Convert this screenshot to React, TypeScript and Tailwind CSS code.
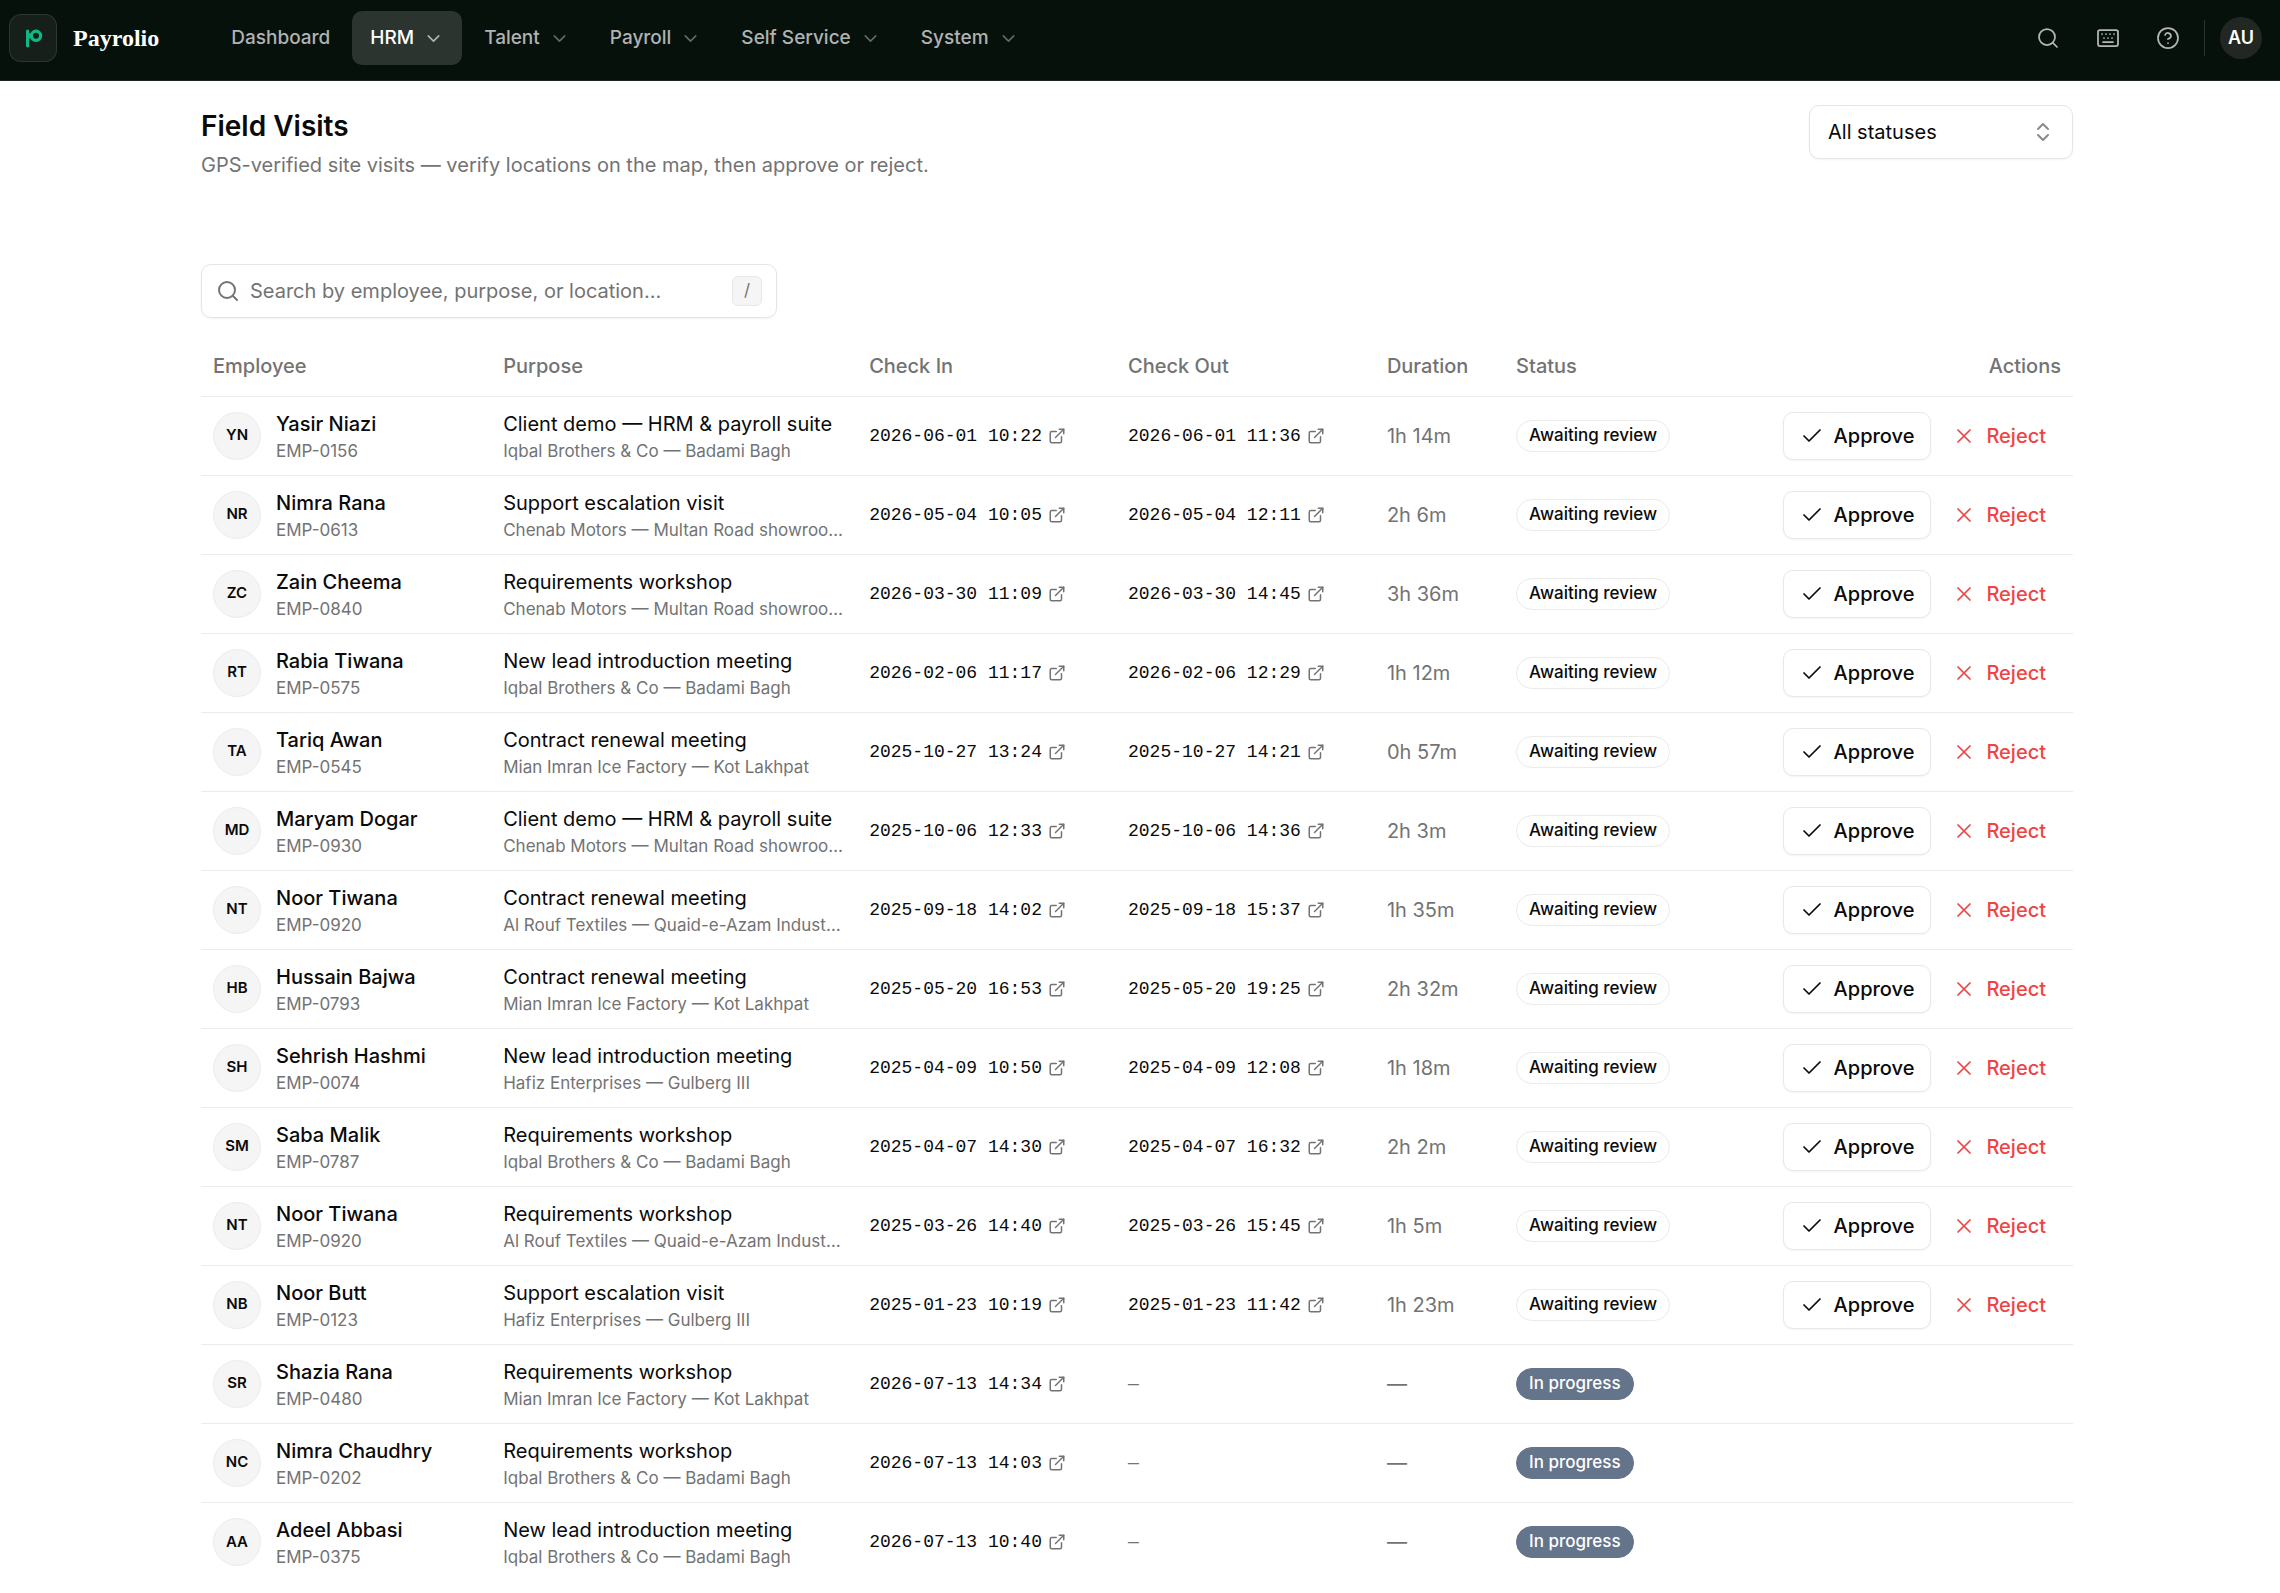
import React, { useState } from "react";

import { Check, ChevronDown, ChevronsUpDown, CircleHelp, ExternalLink, Keyboard, Search, X } from "lucide-react";

type Visit = {
  name: string;
  code: string;
  purpose: string;
  place: string;
  checkIn: string;
  checkOut?: string;
  duration?: string;
};

const navItems = [
  { title: "Dashboard" },
  { title: "HRM", submenu: true, active: true },
  { title: "Talent", submenu: true },
  { title: "Payroll", submenu: true },
  { title: "Self Service", submenu: true },
  { title: "System", submenu: true },
];

const IQBAL = "Iqbal Brothers & Co — Badami Bagh";
const CHENAB = "Chenab Motors — Multan Road showroom, Lahore";
const MIAN = "Mian Imran Ice Factory — Kot Lakhpat";
const ROUF = "Al Rouf Textiles — Quaid-e-Azam Industrial Estate";
const HAFIZ = "Hafiz Enterprises — Gulberg III";

const visits: Visit[] = [
  { name: "Yasir Niazi", code: "EMP-0156", purpose: "Client demo — HRM & payroll suite", place: IQBAL, checkIn: "2026-06-01 10:22", checkOut: "2026-06-01 11:36", duration: "1h 14m" },
  { name: "Nimra Rana", code: "EMP-0613", purpose: "Support escalation visit", place: CHENAB, checkIn: "2026-05-04 10:05", checkOut: "2026-05-04 12:11", duration: "2h 6m" },
  { name: "Zain Cheema", code: "EMP-0840", purpose: "Requirements workshop", place: CHENAB, checkIn: "2026-03-30 11:09", checkOut: "2026-03-30 14:45", duration: "3h 36m" },
  { name: "Rabia Tiwana", code: "EMP-0575", purpose: "New lead introduction meeting", place: IQBAL, checkIn: "2026-02-06 11:17", checkOut: "2026-02-06 12:29", duration: "1h 12m" },
  { name: "Tariq Awan", code: "EMP-0545", purpose: "Contract renewal meeting", place: MIAN, checkIn: "2025-10-27 13:24", checkOut: "2025-10-27 14:21", duration: "0h 57m" },
  { name: "Maryam Dogar", code: "EMP-0930", purpose: "Client demo — HRM & payroll suite", place: CHENAB, checkIn: "2025-10-06 12:33", checkOut: "2025-10-06 14:36", duration: "2h 3m" },
  { name: "Noor Tiwana", code: "EMP-0920", purpose: "Contract renewal meeting", place: ROUF, checkIn: "2025-09-18 14:02", checkOut: "2025-09-18 15:37", duration: "1h 35m" },
  { name: "Hussain Bajwa", code: "EMP-0793", purpose: "Contract renewal meeting", place: MIAN, checkIn: "2025-05-20 16:53", checkOut: "2025-05-20 19:25", duration: "2h 32m" },
  { name: "Sehrish Hashmi", code: "EMP-0074", purpose: "New lead introduction meeting", place: HAFIZ, checkIn: "2025-04-09 10:50", checkOut: "2025-04-09 12:08", duration: "1h 18m" },
  { name: "Saba Malik", code: "EMP-0787", purpose: "Requirements workshop", place: IQBAL, checkIn: "2025-04-07 14:30", checkOut: "2025-04-07 16:32", duration: "2h 2m" },
  { name: "Noor Tiwana", code: "EMP-0920", purpose: "Requirements workshop", place: ROUF, checkIn: "2025-03-26 14:40", checkOut: "2025-03-26 15:45", duration: "1h 5m" },
  { name: "Noor Butt", code: "EMP-0123", purpose: "Support escalation visit", place: HAFIZ, checkIn: "2025-01-23 10:19", checkOut: "2025-01-23 11:42", duration: "1h 23m" },
  { name: "Shazia Rana", code: "EMP-0480", purpose: "Requirements workshop", place: MIAN, checkIn: "2026-07-13 14:34" },
  { name: "Nimra Chaudhry", code: "EMP-0202", purpose: "Requirements workshop", place: IQBAL, checkIn: "2026-07-13 14:03" },
  { name: "Adeel Abbasi", code: "EMP-0375", purpose: "New lead introduction meeting", place: IQBAL, checkIn: "2026-07-13 10:40" },
];

const initials = (name: string) =>
  name
    .split(" ")
    .map((part) => part[0])
    .join("");

const Logo = () => (
  <span className="flex size-12 items-center justify-center rounded-xl border border-white/10 bg-[#171f1b]">
    <svg viewBox="0 0 48 48" className="size-12 shrink-0" fill="none" stroke="#10b981" aria-hidden="true">
      <path d="M18.6 17.2V31.8" strokeWidth="3.2" strokeLinecap="round" />
      <path d="M19 21.8h3.2" strokeWidth="5" />
      <circle cx="27" cy="21.8" r="4.6" strokeWidth="3.2" />
    </svg>
  </span>
);

const NavBar = () => {
  return (
    <header className="flex h-[81px] items-center border-b border-[#1b2420] bg-[#07110c] pr-[18px] pb-1 pl-[9px]">
      <a href="#" className="flex items-center gap-4">
        <Logo />
        <span className="font-['Liberation_Serif',serif] text-2xl font-bold text-white">Payrolio</span>
      </a>
      <nav className="ml-[54px] flex items-center gap-1">
        {navItems.map((item) =>
          item.submenu ? (
            <button
              key={item.title}
              className={`flex h-[54px] items-center gap-[9px] rounded-[10px] px-[18px] text-[19px] font-medium ${
                item.active ? "bg-[#2c3430] text-white" : "text-[#b0b3b1]"
              }`}
            >
              {item.title}
              <ChevronDown size={21} strokeWidth={1.75} className={item.active ? "text-[#b4b7b5]" : "text-[#656b68]"} />
            </button>
          ) : (
            <a
              key={item.title}
              href="#"
              className="flex h-[54px] items-center rounded-[10px] px-[18px] text-[19px] font-medium text-[#b0b3b1]"
            >
              {item.title}
            </a>
          ),
        )}
      </nav>
      <div className="ml-auto flex items-center gap-3 text-[#b4b7b5]">
        <button aria-label="Search" className="flex size-12 items-center justify-center">
          <Search size={24} strokeWidth={1.75} />
        </button>
        <button aria-label="Keyboard shortcuts" className="flex size-12 items-center justify-center">
          <Keyboard size={24} strokeWidth={1.75} />
        </button>
        <button aria-label="Help" className="flex size-12 items-center justify-center">
          <CircleHelp size={24} strokeWidth={1.75} />
        </button>
        <span className="h-9 w-px bg-[#2b3330]" />
        <button className="ml-[3px] flex size-[42px] items-center justify-center rounded-full bg-[#222723] text-lg font-semibold text-white">
          AU
        </button>
      </div>
    </header>
  );
};

const TimeLink = ({ value }: { value?: string }) =>
  value ? (
    <a href="#" className="flex items-center gap-1.5 font-['Liberation_Mono',monospace] text-lg">
      {value}
      <ExternalLink size={18} strokeWidth={2} className="text-[#737373]" />
    </a>
  ) : (
    <span className="font-['Liberation_Mono',monospace] text-lg text-[#737373]">—</span>
  );

const VisitRow = ({ visit }: { visit: Visit }) => {
  const done = Boolean(visit.checkOut);
  return (
    <tr className="h-[79px] border-b border-[#ebebeb] last:border-b-0">
      <td className="px-3">
        <div className="flex items-center gap-[15px]">
          <span className="flex size-12 shrink-0 items-center justify-center rounded-full border border-[#ececec] bg-[#f5f5f5] text-[15px] font-semibold">
            {initials(visit.name)}
          </span>
          <div>
            <div className="text-xl leading-[30px] font-medium">{visit.name}</div>
            <div className="text-[17px] leading-6 text-[#737373]">{visit.code}</div>
          </div>
        </div>
      </td>
      <td className="px-3">
        <div className="truncate text-xl leading-[30px]">{visit.purpose}</div>
        <div className="truncate text-[17px] leading-6 text-[#737373]">{visit.place}</div>
      </td>
      <td className="px-3">
        <TimeLink value={visit.checkIn} />
      </td>
      <td className="px-3">
        <TimeLink value={visit.checkOut} />
      </td>
      <td className="px-3 text-xl text-[#737373]">{visit.duration ?? "—"}</td>
      <td className="px-3">
        {done ? (
          <span className="inline-flex h-8 items-center rounded-full border border-[#ebebeb] px-3 text-[17px] font-medium">
            Awaiting review
          </span>
        ) : (
          <span className="inline-flex h-8 items-center rounded-full border border-[#64748b] bg-[#64748b] px-3 text-[17px] font-medium text-white">
            In progress
          </span>
        )}
      </td>
      <td className="px-3">
        {done && (
          <div className="flex justify-end gap-1.5 text-xl font-medium">
            <button className="flex h-12 items-center gap-[10px] rounded-[10px] border border-[#e8e8e8] bg-white px-4 shadow-xs">
              <Check size={24} strokeWidth={1.75} />
              Approve
            </button>
            <button className="flex h-12 items-center gap-[10px] px-[15px] text-[#ef4444]">
              <X size={24} strokeWidth={1.75} />
              Reject
            </button>
          </div>
        )}
      </td>
    </tr>
  );
};

const App = () => {
  const [query, setQuery] = useState("");
  const [status, setStatus] = useState("all");

  const rows = visits.filter((visit) => {
    const matches = `${visit.name} ${visit.purpose} ${visit.place}`.toLowerCase().includes(query.toLowerCase());
    const state = visit.checkOut ? "awaiting" : "progress";
    return matches && (status === "all" || status === state);
  });

  return (
    <div className="min-h-screen bg-white font-['Inter',sans-serif] text-[#0a0a0a]">
      <NavBar />
      <main className="pr-[6px]">
        <div className="mx-auto max-w-[1872px] pt-6">
          <div className="flex items-start justify-between">
            <div>
              <h1 className="text-[28px] leading-[42px] font-semibold">Field Visits</h1>
              <p className="mt-[3px] text-xl leading-[30px] text-[#737373]">
                GPS-verified site visits — verify locations on the map, then approve or reject.
              </p>
            </div>
            <div className="relative">
              <select
                aria-label="Status"
                value={status}
                onChange={(e) => setStatus(e.target.value)}
                className="h-[54px] w-66 appearance-none rounded-[10px] border border-[#e5e5e5] bg-white px-[18px] text-xl shadow-xs"
              >
                <option value="all">All statuses</option>
                <option value="awaiting">Awaiting review</option>
                <option value="progress">In progress</option>
              </select>
              <ChevronsUpDown
                size={24}
                strokeWidth={2}
                className="pointer-events-none absolute top-[15px] right-[18px] text-[#8a8a8a]"
              />
            </div>
          </div>

          <label className="mt-[84px] flex h-[54px] w-144 items-center rounded-[10px] border border-[#e5e5e5] px-[14px] shadow-xs">
            <Search size={24} strokeWidth={2} className="shrink-0 text-[#737373]" />
            <input
              type="text"
              aria-label="Search visits"
              value={query}
              onChange={(e) => setQuery(e.target.value)}
              placeholder="Search by employee, purpose, or location…"
              className="ml-[10px] min-w-0 flex-1 text-xl outline-none placeholder:text-[#737373]"
            />
            <kbd className="flex size-[30px] items-center justify-center rounded-md border border-[#e8e8e8] bg-[#f5f5f5] font-['Inter',sans-serif] text-[17px] text-[#737373]">
              /
            </kbd>
          </label>

          <table className="mt-[18px] w-full table-fixed border-collapse text-left">
            <colgroup>
              <col className="w-[15.5%]" />
              <col className="w-[19.55%]" />
              <col className="w-[13.83%]" />
              <col className="w-[13.83%]" />
              <col className="w-[6.9%]" />
              <col className="w-[11%]" />
              <col />
            </colgroup>
            <thead>
              <tr className="h-[60px] border-b border-[#ebebeb] text-xl text-[#737373]">
                <th className="px-3 font-medium">Employee</th>
                <th className="px-3 font-medium">Purpose</th>
                <th className="px-3 font-medium">Check In</th>
                <th className="px-3 font-medium">Check Out</th>
                <th className="px-3 font-medium">Duration</th>
                <th className="px-3 font-medium">Status</th>
                <th className="px-3 text-right font-medium">Actions</th>
              </tr>
            </thead>
            <tbody>
              {rows.map((visit) => (
                <VisitRow key={visit.checkIn} visit={visit} />
              ))}
            </tbody>
          </table>
        </div>
      </main>
    </div>
  );
};

export default App;
